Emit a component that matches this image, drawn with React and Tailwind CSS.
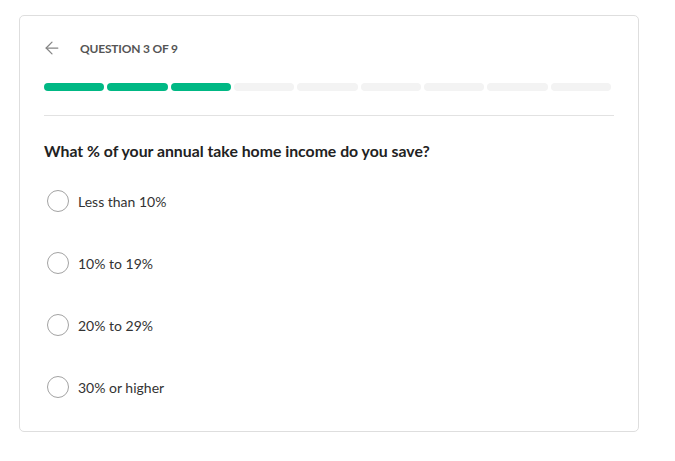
import React, { useState } from 'react';
import { ArrowLeft } from 'lucide-react';

const options = ['Less than 10%', '10% to 19%', '20% to 29%', '30% or higher'];

const App = () => {
  const [selected, setSelected] = useState(null);
  const total = 9;
  const current = 3;

  return (
    <div className="min-h-screen bg-white pt-[15px] pl-[19px] font-['Lato','Noto_Sans',sans-serif]">
      <div className="w-[620px] h-[417px] border border-[#dedede] rounded-[5px] bg-white px-6 pt-6">
        {/* Header */}
        <div className="flex items-center h-4">
          <ArrowLeft size={20} strokeWidth={1.5} className="text-[#858585] -ml-[2px]" />
          <span className="ml-[18px] pt-[2px] text-[12px] font-bold uppercase text-[#555] tracking-[-0.2px]">Question {current} of {total}</span>
        </div>

        {/* Progress */}
        <div className="flex mt-[27px]">
          {Array.from({ length: total }).map((_, i) => (
            <div
              key={i}
              className={`flex-1 h-2 mr-[3px] rounded-full ${i < current ? 'bg-[#00b884]' : 'bg-[#f3f3f3]'}`}
            />
          ))}
        </div>

        <div className="mt-6 border-t border-[#e2e2e2]" />

        <h2 className="mt-[25px] text-[15.8px] leading-5 font-bold text-[#222]">What % of your annual take home income do you save?</h2>

        <div className="mt-[29px] flex flex-col gap-10">
          {options.map((opt, i) => (
            <label key={opt} className="flex items-center cursor-pointer" onClick={() => setSelected(i)}>
              <span className={`w-[22px] h-[22px] rounded-full border-[1.5px] ml-[3px] ${selected === i ? 'border-[#00b884]' : 'border-[#a3a3a3]'}`} />
              <span className="ml-[9px] text-[14px] text-[#333]">{opt}</span>
            </label>
          ))}
        </div>
      </div>
    </div>
  );
};

export default App;
